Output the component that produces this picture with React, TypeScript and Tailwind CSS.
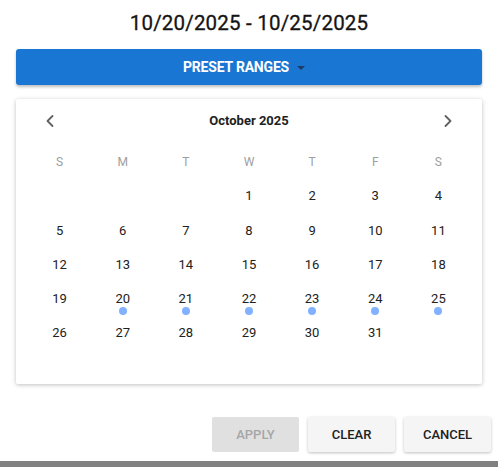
import { ChevronLeft, ChevronRight } from 'lucide-react';

const DAY_NAMES = ['S', 'M', 'T', 'W', 'T', 'F', 'S'];

// October 2025 starts on a Wednesday
const FIRST_OFFSET = 3;
const DAYS_IN_MONTH = 31;
const RANGE_START = 20;
const RANGE_END = 25;

function buildCells() {
  const cells: (number | null)[] = [];
  for (let i = 0; i < FIRST_OFFSET; i++) cells.push(null);
  for (let d = 1; d <= DAYS_IN_MONTH; d++) cells.push(d);
  while (cells.length < 42) cells.push(null);
  return cells;
}

function DayCell({ day }: { day: number | null }) {
  const inRange = day !== null && day >= RANGE_START && day <= RANGE_END;
  return (
    <div className="relative flex h-[34.2px] items-center justify-center text-[13px] text-[#212121]">
      {day}
      {inRange && (
        <span className="absolute left-1/2 top-[25px] h-[8px] w-[8px] -translate-x-1/2 rounded-full bg-[#82b1ff]" />
      )}
    </div>
  );
}

export default function App() {
  const cells = buildCells();

  return (
    <div className="flex h-[467px] w-[498px] flex-col bg-[#808080] font-['Roboto',sans-serif]">
      <div className="flex h-[461px] flex-col bg-white">
        <h1 className="pt-[9px] text-center text-[20.5px] leading-[28px] tracking-[0.2px] text-[#141414] [-webkit-text-stroke:0.3px_#141414]">
          10/20/2025 - 10/25/2025
        </h1>

        <div className="mx-4 mt-[12px]">
          <button className="flex h-[36px] w-full items-center justify-center gap-[8px] rounded-[3px] bg-[#1976d2] pr-[10px] text-[14px] font-bold tracking-[-0.2px] text-white shadow-[0_2px_3px_rgba(0,0,0,0.25)]">
            PRESET RANGES
            <span className="mt-[1px] h-0 w-0 border-x-[4.5px] border-t-[4.5px] border-x-transparent border-t-[#1e3a66]" />
          </button>
        </div>

        <div className="mx-4 mt-[14px] rounded-[2px] bg-white px-3 shadow-[0_1px_4px_rgba(0,0,0,0.25)]">
          <div className="flex h-[44px] items-center justify-between px-[12px]">
            <ChevronLeft className="h-[20px] w-[20px] text-[#616161]" strokeWidth={2.2} />
            <span className="text-[13px] font-bold text-[#212121]">October 2025</span>
            <ChevronRight className="h-[20px] w-[20px] text-[#616161]" strokeWidth={2.2} />
          </div>

          <div className="grid grid-cols-7 pt-[2px]">
            {DAY_NAMES.map((n, i) => (
              <div
                key={i}
                className="flex h-[34px] items-center justify-center text-[12px] text-[#9e9e9e]"
              >
                {n}
              </div>
            ))}
          </div>

          <div className="grid grid-cols-7">
            {cells.map((d, i) => (
              <DayCell key={i} day={d} />
            ))}
          </div>
        </div>

        <div className="mt-[33px] flex justify-end gap-[9px] pr-[7px]">
          <button
            disabled
            className="h-[35px] w-[87px] rounded-[2px] bg-[#e0e0e0] text-[13px] font-medium text-[#a6a6a6]"
          >
            APPLY
          </button>
          <button className="h-[35px] w-[87px] rounded-[2px] bg-[#f5f5f5] text-[13px] font-medium text-[#212121] shadow-[0_1px_3px_rgba(0,0,0,0.25)]">
            CLEAR
          </button>
          <button className="h-[35px] w-[87px] rounded-[2px] bg-[#f5f5f5] text-[13px] font-medium text-[#212121] shadow-[0_1px_3px_rgba(0,0,0,0.25)]">
            CANCEL
          </button>
        </div>
      </div>
    </div>
  );
}
